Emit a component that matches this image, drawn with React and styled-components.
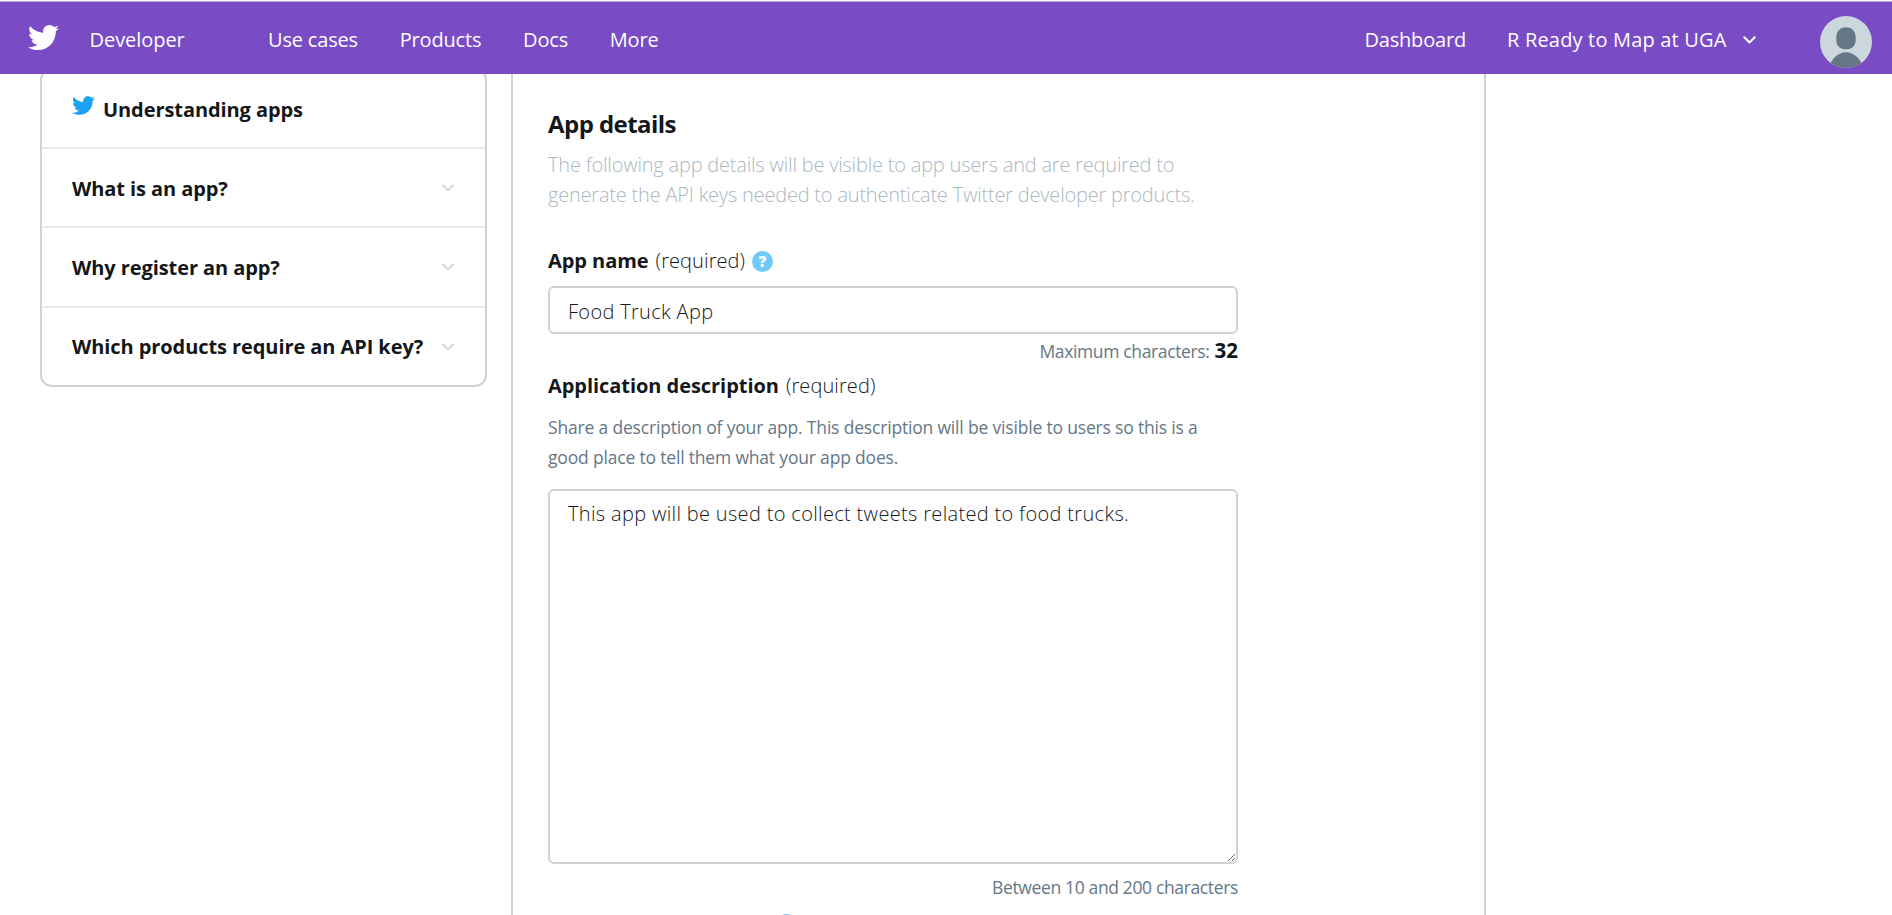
import React from "react";
import styled, { createGlobalStyle } from "styled-components";
import { FaTwitter } from "react-icons/fa";

const GlobalStyle = createGlobalStyle`
  *, *::before, *::after { box-sizing: border-box; }
  body {
    margin: 0;
    background: #fff;
    color: #14171a;
    font-family: "Open Sans", "Noto Sans", sans-serif;
    font-size: 20px;
    overflow: hidden;
  }
`;

const Page = styled.div`
  height: 915px;
  overflow: hidden;
`;

const Header = styled.header`
  position: relative;
  z-index: 1;
  display: flex;
  align-items: center;
  height: 74px;
  padding: 4px 20px 0 28px;
  border-top: 1px solid #f4f5f7;
  box-shadow: inset 0 1px #b5a6d6;
  background: #794bc4;
  color: #fff;
  line-height: 30px;
  white-space: nowrap;
`;

const HeaderBird = styled(FaTwitter)`
  flex: none;
  width: 31px;
  height: 31px;
  margin: -4px 30.5px 0 0;
`;

const Brand = styled.a`
  width: 178.5px;
  letter-spacing: -0.05px;
`;

const Nav = styled.nav`
  display: flex;
  gap: 41.8px;
`;

const NavLink = styled.a`
  letter-spacing: -0.18px;
`;

const Account = styled.div`
  display: flex;
  align-items: center;
  margin-left: auto;
`;

const AccountName = styled.a`
  width: 236px;
  margin-left: 41px;
  letter-spacing: 0.18px;
`;

const AccountChevron = styled.svg`
  width: 13px;
  height: 8px;
  margin-top: 1px;
`;

const Avatar = styled.svg`
  width: 52px;
  height: 52px;
  margin: 5px 0 0 64px;
`;

const Body = styled.div`
  display: flex;
  align-items: flex-start;
  padding-left: 40px;
`;

const Sidebar = styled.aside`
  width: 447px;
  margin: -6px 24px 0 0;
  border: 2px solid #ccd3da;
  border-radius: 12px;
  font-weight: 700;
`;

const SideRow = styled.div`
  display: flex;
  align-items: center;
  height: 79.2px;
  padding: 1px 31px 0 30px;
  border-bottom: 2px solid #e6e9ec;
  letter-spacing: -0.08px;
  white-space: nowrap;

  &:last-child {
    height: 77px;
    border-bottom: 0;
  }
`;

const SideBird = styled(FaTwitter)`
  width: 23px;
  height: 23px;
  margin: -8px 8px 0 0;
  color: #1da1f2;
`;

const RowChevron = styled.svg`
  width: 12px;
  height: 8px;
  margin-left: auto;
  color: #ccd6dd;
`;

const Main = styled.main`
  width: 975px;
  height: 841px;
  padding: 35px 0 0 35px;
  border: solid #ccd3d9;
  border-width: 0 2px;
`;

const Form = styled.form`
  width: 690px;
`;

const Heading = styled.h2`
  margin: 0 0 11px;
  font-size: 24px;
  font-weight: 700;
  line-height: 30px;
  letter-spacing: -0.55px;
`;

const Intro = styled.p`
  margin: 0 0 35px;
  color: #aab8c2;
  font-weight: 300;
  line-height: 30px;
  letter-spacing: -0.2px;
`;

const Label = styled.label`
  display: flex;
  align-items: center;
  gap: 7px;
  height: 30px;
  margin-bottom: ${(p) => p.$gap || 0}px;
  font-weight: 700;
  letter-spacing: -0.05px;
`;

const Required = styled.span`
  font-weight: 300;
  letter-spacing: 0.1px;
`;

const Help = styled.span`
  display: flex;
  align-items: center;
  justify-content: center;
  width: 21px;
  height: 21px;
  margin-left: ${(p) => p.$indent || 0}px;
  margin-top: 2px;
  border-radius: 50%;
  background: #71c9f8;
  color: #fff;
  font-size: 15px;
  font-weight: 800;
  letter-spacing: 0;
`;

const TextField = styled.input`
  display: block;
  width: 690px;
  height: 48px;
  padding: 3px 18px 0;
  border: 2px solid #ccd3d9;
  border-radius: 6px;
  outline: 0;
  color: #14171a;
  font: 300 20px "Open Sans", "Noto Sans", sans-serif;
  letter-spacing: 0.32px;
`;

const TextBox = styled.textarea`
  display: block;
  width: 690px;
  height: 375px;
  padding: 8px 18px;
  border: 2px solid #ccd3d9;
  border-radius: 6px;
  outline: 0;
  color: #14171a;
  font: 300 20px/30px "Open Sans", "Noto Sans", sans-serif;
  letter-spacing: 0.33px;
`;

const Hint = styled.p`
  margin: 0 0 17px;
  color: #657786;
  font-size: 17.5px;
  line-height: 30px;
  letter-spacing: -0.18px;
`;

const Counter = styled.div`
  display: flex;
  justify-content: flex-end;
  align-items: baseline;
  gap: 5px;
  height: 30px;
  margin: ${(p) => p.$top}px 0 ${(p) => p.$bottom}px;
  color: #657786;
  font-size: 17.5px;
  line-height: 30px;
  letter-spacing: -0.36px;
`;

const Limit = styled.b`
  color: #14171a;
  font-size: 20.5px;
  letter-spacing: 0;
`;

const chevron = (
  <path d="M1.2 1.2 L6 6 L10.8 1.2" fill="none" stroke="currentColor" strokeWidth="1.9" strokeLinecap="round" strokeLinejoin="round" />
);

const questions = ["What is an app?", "Why register an app?", "Which products require an API key?"];

export default function App() {
  return (
    <Page>
      <GlobalStyle />
      <Header>
        <HeaderBird />
        <Brand>Developer</Brand>
        <Nav>
          {["Use cases", "Products", "Docs", "More"].map((item) => (
            <NavLink key={item}>{item}</NavLink>
          ))}
        </Nav>
        <Account>
          <NavLink>Dashboard</NavLink>
          <AccountName>R Ready to Map at UGA</AccountName>
          <AccountChevron viewBox="0 0 12 7.4">{chevron}</AccountChevron>
          <Avatar viewBox="0 0 52 52">
            <defs>
              <clipPath id="avatar-disc">
                <circle cx="26" cy="26" r="26" />
              </clipPath>
            </defs>
            <g clipPath="url(#avatar-disc)">
              <rect width="52" height="52" fill="#ccd6dd" />
              <path d="M26 11.3c6.3 0 9.8 4.6 9.8 11.2 0 7.2-3 10.8-9.8 10.8s-9.8-3.6-9.8-10.8c0-6.600 3.500-11.200 9.800-11.200z" fill="#657786" />
              <path d="M9 52c2-9 9-15.800 17-15.800S41 43 43 52z" fill="#657786" />
            </g>
          </Avatar>
        </Account>
      </Header>
      <Body>
        <Sidebar>
          <SideRow>
            <SideBird />
            Understanding apps
          </SideRow>
          {questions.map((question) => (
            <SideRow key={question}>
              {question}
              <RowChevron viewBox="0 0 12 7.4">{chevron}</RowChevron>
            </SideRow>
          ))}
        </Sidebar>
        <Main>
          <Form>
            <Heading>App details</Heading>
            <Intro>
              The following app details will be visible to app users and are required to
              <br />
              generate the API keys needed to authenticate Twitter developer products.
            </Intro>
            <Label $gap={11}>
              App name <Required>(required)</Required>
              <Help>?</Help>
            </Label>
            <TextField defaultValue="Food Truck App" />
            <Counter $top={1} $bottom={5}>
              Maximum characters: <Limit>32</Limit>
            </Counter>
            <Label $gap={12}>
              Application description <Required>(required)</Required>
            </Label>
            <Hint>
              Share a description of your app. This description will be visible to users so this is a
              <br />
              good place to tell them what your app does.
            </Hint>
            <TextBox defaultValue="This app will be used to collect tweets related to food trucks." />
            <Counter $top={8} $bottom={6}>Between 10 and 200 characters</Counter>
            <Label>
              <Help $indent={228} />
            </Label>
          </Form>
        </Main>
      </Body>
    </Page>
  );
}
